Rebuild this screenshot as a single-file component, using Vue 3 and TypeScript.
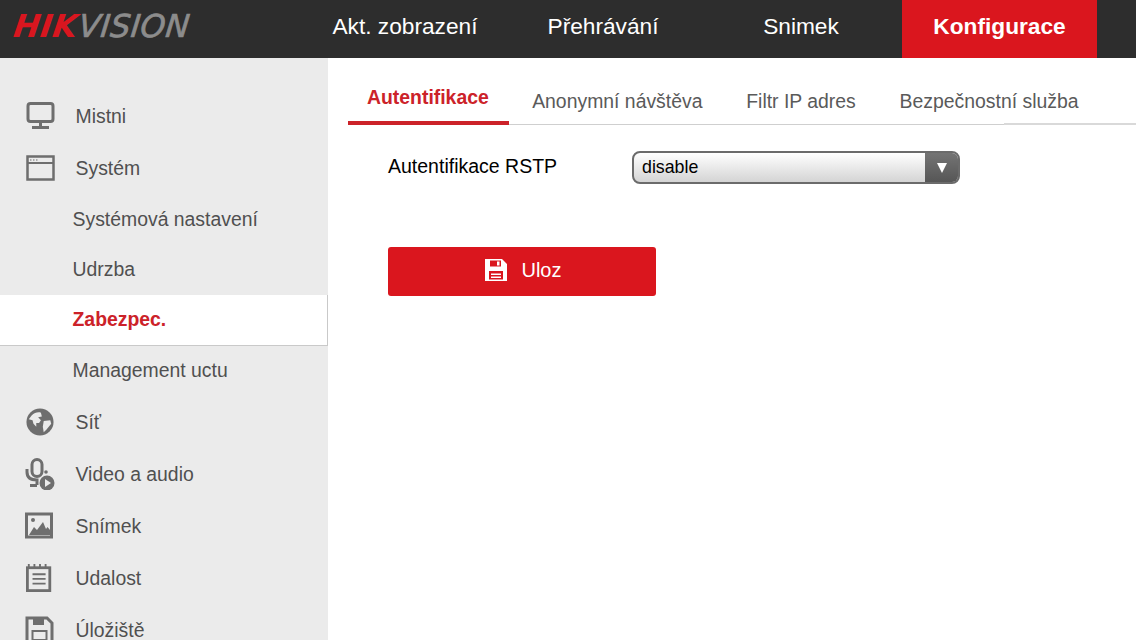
<script setup lang="ts">
interface NavItem { label: string; active?: boolean }
const navItems: NavItem[] = [
  { label: 'Akt. zobrazení' },
  { label: 'Přehrávání' },
  { label: 'Snimek' },
  { label: 'Konfigurace', active: true },
]
const tabs: NavItem[] = [
  { label: 'Autentifikace', active: true },
  { label: 'Anonymní návštěva' },
  { label: 'Filtr IP adres' },
  { label: 'Bezpečnostní služba' },
]
const subItems: NavItem[] = [
  { label: 'Systémová nastavení' },
  { label: 'Udrzba' },
  { label: 'Zabezpec.', active: true },
  { label: 'Management uctu' },
]
</script>

<template>
  <div class="page">
    <header class="topbar">
      <div class="logo"><span class="logo-red">HIK</span><span class="logo-grey">VISION</span></div>
      <nav class="mainnav">
        <a v-for="n in navItems" :key="n.label" class="mainnav-item" :class="{ active: n.active }">{{ n.label }}</a>
      </nav>
    </header>
    <div class="body">
      <aside class="sidebar">
        <div class="row">
          <svg class="ico" viewBox="0 0 30 28"><rect x="3" y="1.500" width="25" height="18" rx="2.500" fill="none" stroke="#6e6e6e" stroke-width="3"/><path d="M15.500 20v4M7 25.500h17" stroke="#6e6e6e" stroke-width="3" fill="none"/></svg>
          <span>Mistni</span>
        </div>
        <div class="row">
          <svg class="ico" viewBox="0 0 30 28"><rect x="2.500" y="2.500" width="26" height="23" fill="none" stroke="#6e6e6e" stroke-width="2.500"/><path d="M2 9h26" stroke="#6e6e6e" stroke-width="2"/><path d="M5 6h1.500M8 6h1.500M11 6h1.500" stroke="#6e6e6e" stroke-width="1.200"/></svg>
          <span>Systém</span>
        </div>
        <div v-for="s in subItems" :key="s.label" class="sub" :class="{ active: s.active }">{{ s.label }}</div>
        <div class="row">
          <svg class="ico" viewBox="0 0 30 30"><circle cx="15" cy="15" r="14.500" fill="#6e6e6e"/><path d="M6 8c3-3 7-4 10-3l1 4-4 1 3 3-2 3-3 0 0 4-3-3-1-4-4-1zM19 14l7-1 1 4-5 6-3 3-1-6z" fill="#ebebeb"/></svg>
          <span>Síť</span>
        </div>
        <div class="row">
          <svg class="ico tall" viewBox="0 0 30 32"><rect x="7" y="1.500" width="10" height="17" rx="5" fill="none" stroke="#6e6e6e" stroke-width="3"/><path d="M2 11v3c0 6 4 8 10 8v5M5 27.500h7" fill="none" stroke="#6e6e6e" stroke-width="3"/><circle cx="21" cy="14" r="1.800" fill="#6e6e6e"/><circle cx="22" cy="25" r="7.500" fill="#6e6e6e"/><path d="M20 21l6 4-6 4z" fill="#ebebeb"/></svg>
          <span>Video a audio</span>
        </div>
        <div class="row">
          <svg class="ico" viewBox="0 0 30 28"><rect x="1.500" y="2" width="25" height="23" fill="none" stroke="#6e6e6e" stroke-width="3"/><circle cx="8" cy="8" r="2" fill="#6e6e6e"/><path d="M4 23l5-8 3 3 6-8 3 7 1.500-2 2.500 3v5z" fill="#6e6e6e"/></svg>
          <span>Snímek</span>
        </div>
        <div class="row">
          <svg class="ico" viewBox="0 0 30 30"><rect x="1.500" y="4" width="24" height="24.500" fill="none" stroke="#6e6e6e" stroke-width="3"/><path d="M3 0v4M9 0v4M15 0v4M21 0v4M7 11h14M7 16h14M7 21h14" stroke="#6e6e6e" stroke-width="2"/></svg>
          <span>Udalost</span>
        </div>
        <div class="row">
          <svg class="ico" viewBox="0 0 30 28"><path d="M2 2h20l5 5v19H2z" fill="none" stroke="#6e6e6e" stroke-width="3"/><path d="M8 2h11v7H8z" fill="#6e6e6e"/><rect x="7.500" y="15" width="14" height="9" fill="none" stroke="#6e6e6e" stroke-width="2"/></svg>
          <span>Úložiště</span>
        </div>
      </aside>
      <main class="content">
        <div class="tabs">
          <a v-for="t in tabs" :key="t.label" class="tab" :class="{ active: t.active }">{{ t.label }}</a>
        </div>
        <div class="form-row">
          <label class="form-label">Autentifikace RSTP</label>
          <div class="select">
            <span class="select-value">disable</span>
            <span class="select-arrow"><i class="tri"></i></span>
          </div>
        </div>
        <button class="save">
          <svg class="save-ico" viewBox="0 0 24 24"><path fill-rule="evenodd" d="M1 1h17l5 5v17H1zM6 2.500v6h11v-6zM13 3.500h2.500v4H13zM5 13v8.500h14V13z" fill="#fff"/><path d="M7 15.500h10v1.500H7zM7 18.500h10V20H7z" fill="#fff"/></svg>
          <span>Uloz</span>
        </button>
      </main>
    </div>
  </div>
</template>

<style>
html, body { margin: 0; background: #fff; }
</style>

<style scoped>
.page {
  width: 1136px;
  height: 640px;
  overflow: hidden;
  display: flex;
  flex-direction: column;
  font-family: "Liberation Sans", Arial, sans-serif;
}
.topbar {
  flex: 0 0 58px;
  background: #2d2d2d;
  display: flex;
  box-sizing: border-box;
}
.logo {
  width: 306px;
  padding-left: 14px;
  box-sizing: border-box;
  font-family: "DejaVu Sans", sans-serif;
  font-size: 31.500px;
  line-height: 52px;
  font-style: italic;
  white-space: nowrap;
}
.logo-red { display: inline-block; color: #d9161f; font-weight: 700; letter-spacing: 0.500px; transform: skewX(-8deg); }
.logo-grey { display: inline-block; margin-left: 1px; color: #8c8c8c; font-weight: 400; letter-spacing: 0.400px; -webkit-text-stroke: 0.7px #8c8c8c; transform: skewX(-6deg); }
.mainnav { display: flex; }
.mainnav-item {
  width: 198px;
  height: 58px;
  box-sizing: border-box;
  padding-bottom: 5px;
  display: flex;
  align-items: center;
  justify-content: center;
  color: #fff;
  font-size: 22.700px;
}
.mainnav-item.active {
  width: 195px;
  margin-left: 2px;
  background: #da161e;
  font-weight: 700;
}
.body { flex: 1; display: flex; min-height: 0; }
.sidebar {
  width: 328px;
  flex: none;
  box-sizing: border-box;
  background: #ebebeb;
  padding-top: 32px;
  color: #505050;
  font-size: 19.400px;
  overflow: hidden;
}
.row {
  height: 52px;
  display: flex;
  align-items: center;
  padding-left: 25px;
}
.row span { margin-left: 20.500px; }
.ico { width: 30px; height: 28px; flex: none; }
.ico.tall { height: 32px; }
.sub {
  height: 50.500px;
  line-height: 49.500px;
  padding-left: 72.500px;
}
.sub:nth-child(3) { line-height: 50.500px; }
.sub.active {
  background: #fff;
  color: #cc2229;
  font-weight: 700;
  box-sizing: border-box;
  border-bottom: 1px solid #c9c9c9;
  border-right: 1px solid #c9c9c9;
  line-height: 48px;
}
.content { flex: 1; padding-left: 20px; position: relative; }
.tabs {
  display: flex;
  height: 67px;
  box-sizing: border-box;
  border-bottom: 1px solid #cfcfcf;
  font-size: 19.400px;
  color: #5a5a5a;
  position: relative;
}
.tabs::after {
  content: "";
  position: absolute;
  left: 656px;
  right: 0;
  bottom: -1px;
  height: 2px;
  background: #d9d9d9;
}
.tab { padding: 32px 21.900px 0; white-space: nowrap; }
.tab.active {
  padding: 28px 20px 0 19px;
  margin-right: 1.500px;
  color: #cc2229;
  font-weight: 700;
  height: 67px;
  box-sizing: border-box;
  border-bottom: 4px solid #cc2229;
}
.form-row {
  display: flex;
  align-items: center;
  margin: 26px 0 0 40px;
  height: 33px;
}
.form-label { width: 244px; font-size: 19.500px; color: #000; margin-top: -3px; }
.select {
  width: 328px;
  height: 33px;
  box-sizing: border-box;
  border: 2px solid #6b6b6b;
  border-radius: 8px;
  background: linear-gradient(#fff, #d4d4d4);
  display: flex;
  overflow: hidden;
  font-size: 17.800px;
  color: #000;
}
.select-value { flex: 1; padding-left: 8px; line-height: 29px; }
.select-arrow {
  width: 33px;
  background: linear-gradient(#747474, #565656);
  display: flex;
  align-items: center;
  justify-content: center;
}
.tri {
  width: 0;
  height: 0;
  border-left: 5.500px solid transparent;
  border-right: 5.500px solid transparent;
  border-top: 10px solid #fff;
}
.save {
  margin: 63px 0 0 40px;
  width: 268px;
  height: 49px;
  border: none;
  border-radius: 3px;
  background: #da161e;
  color: #fff;
  font-family: inherit;
  font-size: 20px;
  display: flex;
  align-items: center;
  justify-content: center;
  padding: 0 0 3px;
}
.save-ico { width: 24px; height: 24px; margin-right: 13px; margin-left: 2px; }
</style>
